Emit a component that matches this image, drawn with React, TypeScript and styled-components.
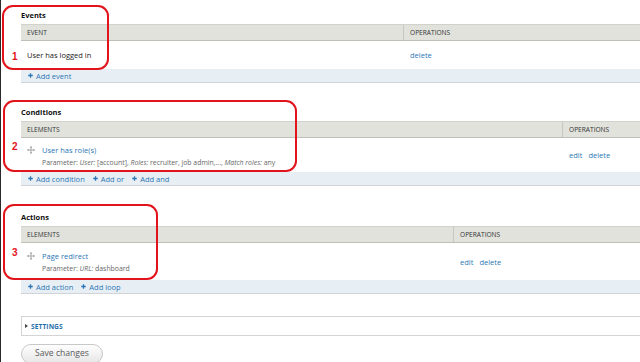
import styled, { createGlobalStyle } from 'styled-components';

const GlobalStyle = createGlobalStyle`
	html, body {
		margin: 0;
		padding: 0;
		background: #fff;
	}
	body {
		font-family: 'Open Sans', 'DejaVu Sans', sans-serif;
		color: #222;
	}
`;

const StyledPage = styled.div`
	position: relative;
	width: 640px;
	height: 362px;
	overflow: hidden;
	border-left: 1px solid #2a2a2a;
	padding: 10px 0 0 20px;
	box-sizing: border-box;
	background: #fff;
`;

const StyledSection = styled.section<{ $gap: number }>`
	width: 680px;
	margin-bottom: ${({ $gap }) => $gap}px;
`;

const StyledTitleRow = styled.div`
	display: flex;
	align-items: center;
	justify-content: space-between;
	height: 10px;
	margin-bottom: 4px;
`;

const StyledTitle = styled.h3`
	margin: 0;
	font-size: 7.5px;
	font-weight: 700;
	color: #111;
	line-height: 10px;
`;

const StyledWeights = styled.a`
	font-size: 7px;
	color: #2b77b5;
	text-decoration: none;
	white-space: nowrap;
`;

const StyledTable = styled.div`
	display: flex;
	flex-direction: column;
`;

const StyledRow = styled.div<{ $first: number }>`
	display: grid;
	grid-template-columns: ${({ $first }) => $first}px 1fr;
`;

const StyledHead = styled(StyledRow)`
	height: 17px;
	background: #e1e2dc;
	border-top: 1px solid #d2d2cc;
	border-bottom: 1px solid #bfbfba;
	box-sizing: border-box;
`;

const StyledHeadCell = styled.div<{ $divider?: boolean }>`
	display: flex;
	align-items: center;
	padding-left: 6px;
	font-size: 6.6px;
	text-transform: uppercase;
	color: #333;
	border-left: ${({ $divider }) => ($divider ? '1px solid #c8c8c2' : 'none')};
`;

const StyledBody = styled(StyledRow)<{ $h: number }>`
	height: ${({ $h }) => $h}px;
	background: #fff;
`;

const StyledCell = styled.div`
	display: flex;
	align-items: center;
	padding-left: 6px;
	font-size: 7.5px;
	color: #222;
`;

const StyledOps = styled(StyledCell)`
	padding-left: 7px;
	gap: 6px;
`;

const StyledLink = styled.a`
	color: #2b77b5;
	text-decoration: none;
	font-size: 7.5px;
	line-height: 10px;
	white-space: nowrap;
`;

const StyledElement = styled.div`
	display: flex;
	align-items: flex-start;
	gap: 7px;
	padding-top: 1px;
`;

const StyledHandle = styled.svg`
	width: 8px;
	height: 8px;
	margin-top: 1px;
	flex: none;
`;

const StyledElementText = styled.div`
	display: flex;
	flex-direction: column;
	gap: 3px;
`;

const StyledDescription = styled.div`
	font-size: 6.9px;
	line-height: 9px;
	color: #666;
	white-space: nowrap;

	em {
		font-style: italic;
	}
`;

const StyledFoot = styled.div`
	display: flex;
	align-items: center;
	gap: 8px;
	height: 13px;
	padding-left: 7px;
	background: #e7eef4;
	border-bottom: 1px solid #d0d4d8;
`;

const StyledAdd = styled.a`
	display: flex;
	align-items: center;
	gap: 3px;
	color: #2b77b5;
	font-size: 7.5px;
	text-decoration: none;
	white-space: nowrap;
`;

const StyledPlus = styled.svg`
	width: 5px;
	height: 5px;
`;

const StyledDetails = styled.div`
	display: flex;
	align-items: center;
	gap: 3px;
	width: 680px;
	height: 20px;
	padding-left: 3px;
	box-sizing: border-box;
	border: 1px solid #d4d4d4;
	border-right: none;
`;

const StyledCaret = styled.span`
	width: 0;
	height: 0;
	border-top: 2px solid transparent;
	border-bottom: 2px solid transparent;
	border-left: 3px solid #444;
`;

const StyledSummary = styled.span`
	font-size: 6.6px;
	font-weight: 700;
	color: #1f6fae;
	letter-spacing: 0.1px;
`;

const StyledButton = styled.button`
	margin-top: 8px;
	width: 82px;
	height: 20px;
	border: 1px solid #c8c8c8;
	border-radius: 10px;
	background: linear-gradient(#fefefe, #e6e6e6);
	font-family: 'Open Sans', sans-serif;
	font-size: 8.6px;
	color: #5a5a5a;
	padding: 0 0 3px;
`;

const StyledMark = styled.div<{ $x: number; $y: number; $w: number; $h: number }>`
	position: absolute;
	left: ${({ $x }) => $x}px;
	top: ${({ $y }) => $y}px;
	width: ${({ $w }) => $w}px;
	height: ${({ $h }) => $h}px;
	border: 2px solid #e3131b;
	border-radius: 11px;
	box-sizing: border-box;
	pointer-events: none;
`;

const StyledNumber = styled.span<{ $y: number }>`
	position: absolute;
	left: 11px;
	top: ${({ $y }) => $y}px;
	font-family: 'Liberation Sans', Arial, sans-serif;
	font-size: 10px;
	font-weight: 700;
	color: #e3131b;
	line-height: 10px;
`;

const Handle = () => (
	<StyledHandle viewBox="0 0 16 16">
		<g stroke="#8a8a8a" strokeWidth="1.4" fill="none">
			<line x1="8" y1="2" x2="8" y2="14" />
			<line x1="2" y1="8" x2="14" y2="8" />
		</g>
		<g fill="#8a8a8a">
			<polygon points="8,0 5.5,3 10.5,3" />
			<polygon points="8,16 5.5,13 10.5,13" />
			<polygon points="0,8 3,5.5 3,10.5" />
			<polygon points="16,8 13,5.5 13,10.5" />
		</g>
	</StyledHandle>
);

const Plus = () => (
	<StyledPlus viewBox="0 0 10 10">
		<path d="M5 0.5v9M0.5 5h9" stroke="#2b77b5" strokeWidth="2.6" />
	</StyledPlus>
);

const AddLink = ({ label }: { label: string }) => (
	<StyledAdd>
		<Plus />
		{label}
	</StyledAdd>
);

const App = () => {
	return (
		<>
			<GlobalStyle />
			<StyledPage>
				<StyledSection $gap={24}>
					<StyledTitleRow>
						<StyledTitle>Events</StyledTitle>
					</StyledTitleRow>
					<StyledTable>
						<StyledHead $first={382}>
							<StyledHeadCell>Event</StyledHeadCell>
							<StyledHeadCell $divider>Operations</StyledHeadCell>
						</StyledHead>
						<StyledBody $first={382} $h={28}>
							<StyledCell>User has logged in</StyledCell>
							<StyledOps>
								<StyledLink>delete</StyledLink>
							</StyledOps>
						</StyledBody>
						<StyledFoot>
							<AddLink label="Add event" />
						</StyledFoot>
					</StyledTable>
				</StyledSection>

				<StyledSection $gap={26}>
					<StyledTitleRow>
						<StyledTitle>Conditions</StyledTitle>
						<StyledWeights>Show row weights</StyledWeights>
					</StyledTitleRow>
					<StyledTable>
						<StyledHead $first={541}>
							<StyledHeadCell>Elements</StyledHeadCell>
							<StyledHeadCell $divider>Operations</StyledHeadCell>
						</StyledHead>
						<StyledBody $first={541} $h={34}>
							<StyledCell>
								<StyledElement>
									<Handle />
									<StyledElementText>
										<StyledLink>User has role(s)</StyledLink>
										<StyledDescription>
											Parameter: <em>User:</em> [account], <em>Roles:</em> recruiter,
											job admin,..., <em>Match roles:</em> any
										</StyledDescription>
									</StyledElementText>
								</StyledElement>
							</StyledCell>
							<StyledOps>
								<StyledLink>edit</StyledLink>
								<StyledLink>delete</StyledLink>
							</StyledOps>
						</StyledBody>
						<StyledFoot>
							<AddLink label="Add condition" />
							<AddLink label="Add or" />
							<AddLink label="Add and" />
						</StyledFoot>
					</StyledTable>
				</StyledSection>

				<StyledSection $gap={22}>
					<StyledTitleRow>
						<StyledTitle>Actions</StyledTitle>
						<StyledWeights>Show row weights</StyledWeights>
					</StyledTitleRow>
					<StyledTable>
						<StyledHead $first={432}>
							<StyledHeadCell>Elements</StyledHeadCell>
							<StyledHeadCell $divider>Operations</StyledHeadCell>
						</StyledHead>
						<StyledBody $first={432} $h={37}>
							<StyledCell>
								<StyledElement>
									<Handle />
									<StyledElementText>
										<StyledLink>Page redirect</StyledLink>
										<StyledDescription>
											Parameter: <em>URL:</em> dashboard
										</StyledDescription>
									</StyledElementText>
								</StyledElement>
							</StyledCell>
							<StyledOps>
								<StyledLink>edit</StyledLink>
								<StyledLink>delete</StyledLink>
							</StyledOps>
						</StyledBody>
						<StyledFoot>
							<AddLink label="Add action" />
							<AddLink label="Add loop" />
						</StyledFoot>
					</StyledTable>
				</StyledSection>

				<StyledDetails>
					<StyledCaret />
					<StyledSummary>SETTINGS</StyledSummary>
				</StyledDetails>
				<StyledButton>Save changes</StyledButton>

				<StyledMark $x={1} $y={5} $w={107} $h={65} />
				<StyledMark $x={2} $y={100} $w={294} $h={72} />
				<StyledMark $x={2} $y={204} $w={155} $h={76} />
				<StyledNumber $y={52}>1</StyledNumber>
				<StyledNumber $y={142}>2</StyledNumber>
				<StyledNumber $y={248}>3</StyledNumber>
			</StyledPage>
		</>
	);
};

export default App;
